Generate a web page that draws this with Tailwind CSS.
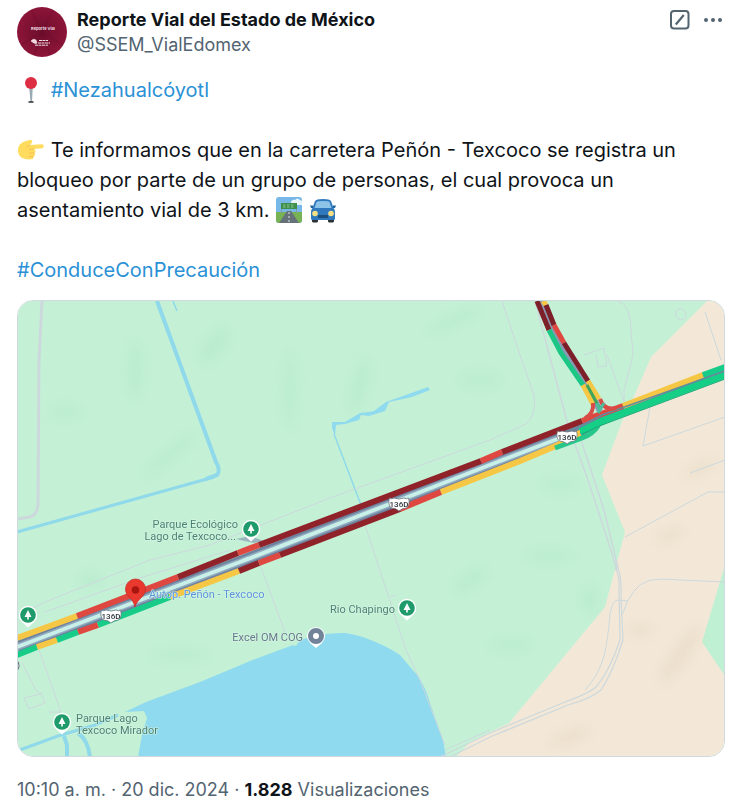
<!DOCTYPE html>
<html lang="es">
<head>
    <meta charset="UTF-8">
    <meta name="viewport" content="width=device-width, initial-scale=1.0">
    <title>Reporte Vial del Estado de México</title>
    <script src="https://cdn.jsdelivr.net/npm/@tailwindcss/browser@4"></script>
</head>
<body class="bg-white text-[#0f1419] font-['Inter',sans-serif]">
    <article class="pl-[17px] pr-[18px] pt-[7px]">
        <!-- Author -->
        <header class="flex items-start">
            <a href="#perfil" class="shrink-0" aria-label="Reporte Vial">
                <svg class="size-[50px]" viewBox="0 0 50 50">
                    <defs>
                        <radialGradient id="wine">
                            <stop offset="0" stop-color="#6e0d2c"/>
                            <stop offset="1" stop-color="#8c1538"/>
                        </radialGradient>
                    </defs>
                    <circle cx="25" cy="25" r="25" fill="url(#wine)"/>
                    <path d="M25 25 14 3M25 25 36 3M25 25 4 38M25 25 46 38M25 25 17 48M25 25 33 48" stroke="#5f0a26" stroke-opacity=".2" stroke-width="2"/>
                    <text x="26" y="23" text-anchor="middle" font-size="4" font-weight="700" fill="#f3dfe5">Reporte Vial</text>
                    <path d="M14 34q2-3 5-1l1 3q-3 1-6-2zM17 36l3 1" fill="#f1dce2" stroke="#f1dce2" stroke-width=".6"/>
                    <path d="M22 33.500h9M21 36h12M18 38.200h13" stroke="#f1dce2" stroke-width="1" stroke-dasharray="3 .5"/>
                </svg>
            </a>
            <div class="ml-[10px] min-w-0 flex-1">
                <h1 class="text-[18px] leading-[25px] font-bold">Reporte Vial del Estado de México</h1>
                <a href="#perfil" class="block text-[18px] leading-[25px] text-[#536471]">@SSEM_VialEdomex</a>
            </div>
            <div class="flex items-center gap-[9px] text-[#536471]">
                <button type="button" class="size-6" aria-label="Grok">
                    <svg class="size-6" viewBox="0 0 24 24" fill="none" stroke="currentColor" stroke-width="2">
                        <rect x="3" y="4" width="17.500" height="17.500" rx="3"/>
                        <path d="M7.800 17.500 15.800 8" stroke-width="2.200"/>
                    </svg>
                </button>
                <button type="button" class="size-6" aria-label="Más opciones">
                    <svg class="size-6" viewBox="0 0 24 24" fill="currentColor">
                        <circle cx="5" cy="13" r="2"/><circle cx="12" cy="13" r="2"/><circle cx="19" cy="13" r="2"/>
                    </svg>
                </button>
            </div>
        </header>

        <!-- Text -->
        <div class="mt-[18px] flex flex-col gap-[30px] text-[20px] leading-[30px]">
            <p>
                <svg class="inline-block h-[26px] w-[28px] align-[-6px]" viewBox="0 0 28 26">
                    <path d="M12.300 11h3.400L15 25h-1.500z" fill="#99aab5"/>
                    <path d="M11.500 25h5" stroke="#292f33" stroke-width="1.500"/>
                    <circle cx="14" cy="6" r="6" fill="#dd2e44"/>
                </svg>
                <a href="#nezahualcoyotl" class="text-[#2a91d6]">#Nezahualcóyotl</a>
            </p>
            <p>
                <svg class="inline-block h-[24px] w-[28px] align-[-5px]" viewBox="0 0 28 24">
                    <path d="M1 12C1 6 6 3 13 2c2-.4 3 1 2 2.500L13 7l12-.8c2 0 2.500 3.800 0 4l-8 .8c2 1 2 3 .6 4 .8 1.400.3 3-1 3.400.3 1.600-.8 2.800-2.600 2.900C6 22 1 19 1 12z" fill="#ffdc5d"/>
                    <path d="m13 7-4 2.500M12 11.500l5-.5M12 15.200l5.600-.2M12 18.600l4.600-.2" stroke="#f3b04f" stroke-width=".7" fill="none"/>
                </svg>
                Te informamos que en la carretera Peñón - Texcoco se registra un bloqueo por parte de un grupo de personas, el cual provoca un asentamiento vial de 3 km.
                <svg class="mx-px inline-block size-[26px] align-[-6px]" viewBox="0 0 26 26">
                    <rect width="26" height="26" rx="3" fill="#77b8e8"/>
                    <path d="M15 5q1-3 4-2 2-3 5 0l2 1v4h-9q-3-1-2-3z" fill="#e9f3fa"/>
                    <path d="M0 15h26v8q0 3-3 3H3q-3 0-3-3z" fill="#77b255"/>
                    <path d="M11 14h4l8 12H3z" fill="#66727a"/>
                    <path d="M13 15v11" stroke="#e1e8ed" stroke-dasharray="2 2"/>
                    <path d="M5.500 6v10M20.500 6v10" stroke="#8899a6"/>
                    <path d="M5 6h16v6H5z" fill="#3e8f4b"/>
                    <path d="M7 8h12M7 10h12" stroke="#9fd0a5" stroke-width=".8" stroke-dasharray="2.500 1.500"/>
                </svg>
                <svg class="mx-px inline-block size-[26px] align-[-6px]" viewBox="0 0 26 26">
                    <path d="M2 20h6v4q0 1.500-1.500 1.500h-3Q2 25.500 2 24zM18 20h6v4q0 1.500-1.500 1.500h-3Q18 25.500 18 24z" fill="#292f33"/>
                    <path d="M5 4q1-2 8-2t8 2l2.500 7q1.500 1.500 1.500 4v7q0 1-2 1H3q-2 0-2-1v-7q0-2.500 1.500-4z" fill="#2f78bd"/>
                    <path d="M6.500 5q1-1 6.500-1t6.500 1l2 6h-17z" fill="#8cc4e8"/>
                    <path d="M0 8.500h3v2.500H1zM26 8.500h-3v2.500h2z" fill="#226699"/>
                    <path d="M8 18h10v3H8z" fill="#1d4f7d"/>
                    <circle cx="5" cy="16.500" r="2.800" fill="#f7df83"/><circle cx="21" cy="16.500" r="2.800" fill="#f7df83"/>
                </svg>
            </p>
            <p><a href="#conduceconprecaucion" class="text-[#2a91d6]">#ConduceConPrecaución</a></p>
        </div>

        <!-- Map -->
        <figure class="mt-[15px] overflow-hidden rounded-2xl border border-[#cfd9de]">
            <svg class="block w-full font-['Roboto',sans-serif]" viewBox="18 301 706 455" role="img" aria-label="Mapa de tráfico">
                <defs>
                    <filter id="soft" x="-50%" y="-50%" width="200%" height="200%"><feGaussianBlur stdDeviation="6"/></filter>
                    <g id="tree">
                        <path d="M0 12.500-6 7h12z" fill="#fff"/>
                        <circle r="9.200" fill="#fff"/>
                        <circle r="7.800" fill="#1f9a6b"/>
                        <path d="M0-5 3.500 2H.8v2.500H-.8V2h-2.700z" fill="#fff"/>
                    </g>
                    <g id="shield">
                        <path d="M-9.500-6Q-7.500-4.500-5-6q5 2 10 0 2.500 1.500 4.500 0 2 7-2 10-4.500 0-7.500 3-3-3-7.500-3-4-3-2-10z" fill="#fff" stroke="#6f7780" stroke-width=".8"/>
                        <text y="3.200" text-anchor="middle" font-size="8" font-weight="500" fill="#30363c">136D</text>
                    </g>
                </defs>

                <!-- Land -->
                <path d="M17 301h708v456H17z" fill="#c4f1d6"/>
                <path d="M707 301 651 357 636 392 623 419 602 475 625 532 605 607 509 723 470 742 456 757H725V301z" fill="#f3e8d7"/>
                <path d="M725 565 702 642 725 676z" fill="#bff0d3"/>
                <g filter="url(#soft)" fill="#9fdcb8" opacity=".22">
                    <ellipse cx="135" cy="370" rx="8" ry="30"/><ellipse cx="215" cy="345" rx="10" ry="22" transform="rotate(35 215 345)"/>
                    <ellipse cx="65" cy="412" rx="18" ry="6"/><ellipse cx="170" cy="455" rx="35" ry="6" transform="rotate(-40 170 455)"/>
                    <ellipse cx="360" cy="385" rx="8" ry="28" transform="rotate(15 360 385)"/><ellipse cx="290" cy="390" rx="6" ry="40"/>
                    <ellipse cx="480" cy="380" rx="22" ry="7"/><ellipse cx="455" cy="320" rx="30" ry="6" transform="rotate(-25 455 320)"/>
                    <ellipse cx="550" cy="556" rx="25" ry="6"/><ellipse cx="470" cy="580" rx="20" ry="8" transform="rotate(-35 470 580)"/>
                    <ellipse cx="590" cy="600" rx="8" ry="15"/><ellipse cx="510" cy="645" rx="22" ry="6"/>
                    <ellipse cx="90" cy="580" rx="12" ry="8"/><ellipse cx="180" cy="655" rx="30" ry="6"/><ellipse cx="560" cy="485" rx="20" ry="6"/>
                </g>
                <g filter="url(#soft)" fill="#dcceb8" opacity=".35">
                    <ellipse cx="570" cy="737" rx="22" ry="6" transform="rotate(-20 570 737)"/><ellipse cx="680" cy="655" rx="8" ry="34" transform="rotate(35 680 655)"/>
                    <ellipse cx="700" cy="468" rx="18" ry="5" transform="rotate(-25 700 468)"/><ellipse cx="640" cy="630" rx="12" ry="6"/>
                    <ellipse cx="670" cy="535" rx="14" ry="6" transform="rotate(-25 670 535)"/>
                </g>

                <!-- Water -->
                <path d="M138 757 142 735 147 718 144 711 125 712 146 702 200 682 250 661 293 645 296 646 300 640Q324 632 346 633C365 636 385 645 400 655L418 676Q426 688 430 703L443 740 446 757z" fill="#8fdaee"/>
                <g fill="none" stroke="#8fd9ea">
                    <path d="M157 301 216 462Q221 470 217 475L206 479" stroke-width="4"/>
                    <path d="M214 477 17 532" stroke-width="3"/>
                    <path d="M173 301 177 311M334 434 361 505" stroke-width="1.500"/>
                    <path d="M17 751 58 736 95 725 118 715" stroke-width="3"/>
                    <path d="M64 736 67 745 67 757M78 733Q88 740 90 757" stroke-width="4"/>
                </g>
                <path d="M332 422 345 422 360 413 369 412 374 411 386 402 428 387 430 390 412 397 389 402 385 411 369 416 361 415 359 420 345 424 336 425 335 436 332 428z" fill="#8fdaee"/>
                <path d="M236 539 250 536 264 541 254 543z" fill="#8a9db8" opacity=".7"/>

                <!-- Minor roads -->
                <g fill="none" stroke="#ccd8dc">
                    <path d="M42 301 39 360 38 505Q37 515 30 517L17 519" stroke-width="3"/>
                    <path d="M502 301 520 355 534 395Q537 415 526 424L490 440 330 498 210 545 150 560 45 602 17 616M230 550 140 578 45 612"/>
                    <path d="M535 301 556 380 568 425 588 480 606 535 617 570M581 440 604 510 618 568" stroke-width="1.500"/>
                    <path d="M618 301Q631 305 631 330L633 355 624 390V408M584 355 604 348 607 366 598 367 596 355M607 355 627 410"/>
                    <path d="M705 312 721 360M650 407 643 446 725 417M690 473 725 460M625 537 708 492H725"/>
                    <path d="M615 568Q620 575 619 590L620 640Q611 668 597 686 590 693 565 702L490 733 440 757M618 568Q622 578 621 600L623 640Q613 672 601 690 590 699 568 705L490 737 450 757" stroke-width="1.200"/>
                    <path d="M622 615Q632 585 648 581 657 578 680 580L725 582M609 625Q610 600 618 600L628 601M609 625Q606 652 602 662 597 677 585 690"/>
                    <path d="M365 525 406 650 420 680 445 745M390 597 396 595M260 565 285 632M39 650 61 712 49 712M22 663 36 690 41 694 24 698 29 709 45 703 41 692M445 750 490 730"/>
                    <path d="M676 311q6-5 9 0 3 8-4 9-7-2-5-9z"/>
                </g>

                <!-- Main highway -->
                <g fill="none">
                    <path d="M17 647 240 562 400 500 500 461 575 433 605 417 725 371" stroke="#6d83a0" stroke-width="12"/>
                    <path d="M17 647 240 562 400 500 500 461 560 438" stroke="#90a9bd" stroke-width="7"/>
                    <path d="M17 647 240 562 400 500 500 461 560 438" stroke="#c8efe8" stroke-width="4"/>

                    <g stroke-width="6">
                        <path d="M17 638 77 616" stroke="#f6c744"/>
                        <path d="M77 616 178 577" stroke="#de4840"/>
                        <path d="M178 577 238 553" stroke="#90222a"/>
                        <path d="M238 553 259 545" stroke="#de4840"/>
                        <path d="M259 545 481 461" stroke="#90222a"/>
                        <path d="M481 461 502 452" stroke="#de4840"/>
                        <path d="M502 452 582 421" stroke="#90222a"/>
                        <path d="M582 421 623 406" stroke="#de4840"/>
                        <path d="M623 406 703 375" stroke="#f6c744"/>
                        <path d="M703 375 725 367" stroke="#16cc88"/>

                        <path d="M17 655 37 647" stroke="#16cc88"/>
                        <path d="M37 647 57 640" stroke="#f6c744"/>
                        <path d="M57 640 78 632" stroke="#16cc88"/>
                        <path d="M78 632 98 625" stroke="#de4840"/>
                        <path d="M98 625 170 597" stroke="#16cc88"/>
                        <path d="M170 597 239 571" stroke="#f6c744"/>
                        <path d="M239 571 259 563" stroke="#90222a"/>
                        <path d="M259 563 280 555" stroke="#de4840"/>
                        <path d="M280 555 400 509" stroke="#90222a"/>
                        <path d="M400 509 441 492" stroke="#de4840"/>
                        <path d="M441 492 520 461 558 445 580 433" stroke="#f6c744"/>
                        <path d="M555 448 582 438Q593 434 598 426" stroke="#27c78c" stroke-width="5"/>
                        <path d="M580 432 602 421 725 375" stroke="#14cf85" stroke-width="7"/>
                    </g>
                    <path d="M570 431 602 415 725 371" stroke="#648c9c" stroke-width="1.500"/>
                    <path d="M582 434 602 425 725 379" stroke="#17a878"/>

                    <!-- Branch to the north -->
                    <path d="M541 301 558 338 588 388 600 411" stroke="#8b9ab4" stroke-width="6"/>
                    <g stroke-width="5">
                        <path d="M537 301 549 330" stroke="#7c1f28"/>
                        <path d="M549 330 561 353 583 385" stroke="#1cc786"/>
                        <path d="M583 385 593 404" stroke="#f6c744"/>
                        <path d="M543 301 546 305" stroke="#f6c744"/>
                        <path d="M546 305 554 325" stroke="#7c1f28"/>
                        <path d="M554 325 564 343" stroke="#de4840"/>
                        <path d="M564 343 588 381" stroke="#7c1f28"/>
                        <path d="M588 381 599 399" stroke="#f6c744"/>
                        <path d="M593 403Q594 414 585 418M600 399Q604 411 616 408" stroke="#d84b46" stroke-width="4"/>
                        <path d="M587 385 600 409" stroke="#3da65c" stroke-width="3"/>
                        <path d="M597 403 600 412M604 403 598 413" stroke="#4bbd9b" stroke-width="3"/>
                    </g>
                </g>
                <path d="m575 432 5-2v5l-5 2z" fill="#f6c744"/>
                <use href="#shield" x="567" y="437"/>
                <use href="#shield" x="399" y="504"/>
                <use href="#shield" x="111" y="616"/>
                <path d="M17 660q4 6 0 11" fill="#fff" stroke="#59616a"/>

                <!-- Places -->
                <use href="#tree" x="251" y="529"/>
                <use href="#tree" x="28" y="615"/>
                <use href="#tree" x="407" y="608"/>
                <use href="#tree" x="62" y="722"/>
                <path d="m316 648-6-5h12z" fill="#fff"/>
                <circle cx="316" cy="636" r="9" fill="#fff"/>
                <circle cx="316" cy="636" r="5.500" fill="#fff" stroke="#72849a" stroke-width="5"/>

                <g font-size="11" stroke="#d8f5e4" stroke-width="1" paint-order="stroke" stroke-linejoin="round">
                    <g fill="#4b8274">
                        <text x="238" y="528" text-anchor="end">Parque Ecológico</text>
                        <text x="236" y="540" text-anchor="end">Lago de Texcoco...</text>
                        <text x="395" y="613" text-anchor="end">Rio Chapingo</text>
                        <text x="76" y="722">Parque Lago</text>
                        <text x="76" y="734">Texcoco Mirador</text>
                    </g>
                    <text x="303" y="641" text-anchor="end" fill="#66788a">Excel OM COG</text>
                    <text x="149" y="598" fill="#5c94dc">Autop. Peñón - Texcoco</text>
                </g>

                <path d="M135 607C134 599 125 596 125.500 589A10 10 0 0 1 145.500 589C146 596 137 599 135 607z" fill="#e9392f" stroke="#c32a23" stroke-width=".7"/>
                <circle cx="135.500" cy="590" r="3.800" fill="#a9150f"/>
            </svg>
        </figure>

        <!-- Date and views -->
        <footer class="mt-[20px] text-[18px] leading-[25px] text-[#536471]">
            <a href="#fecha">10:10 a. m. · 20 dic. 2024</a> · <strong class="font-bold text-[#0f1419]">1.828</strong> Visualizaciones
        </footer>
    </article>
</body>
</html>
